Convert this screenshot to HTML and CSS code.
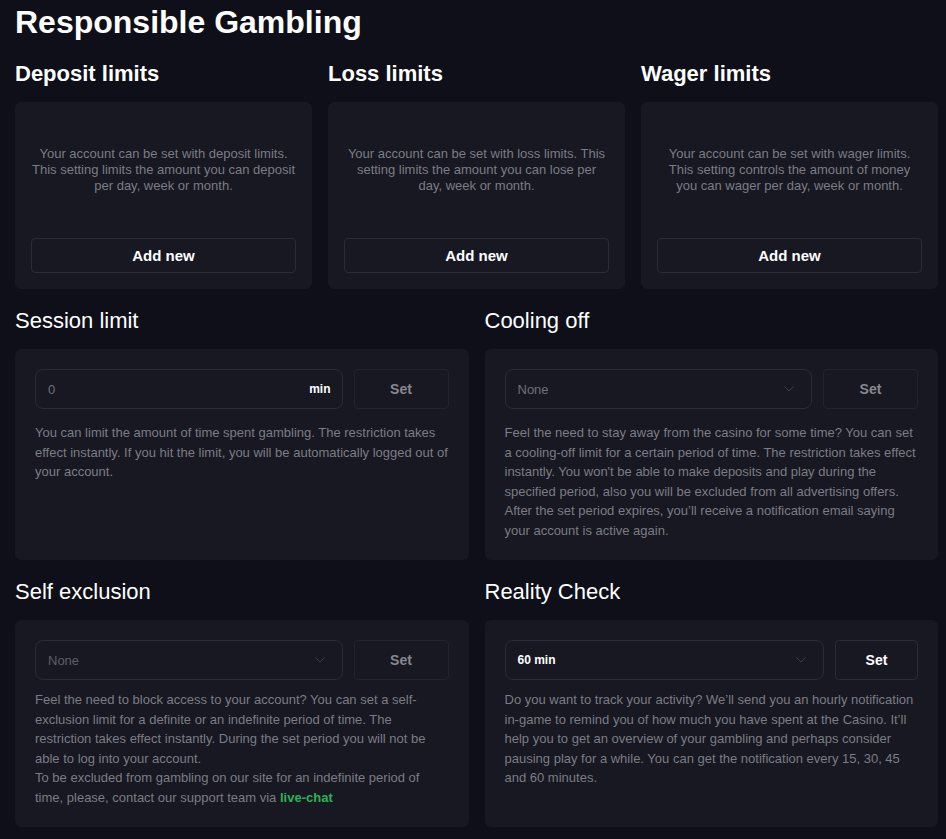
FILE: index.html
```html
<!DOCTYPE html>
<html lang="en">
<head>
<meta charset="utf-8">
<title>Responsible Gambling</title>
<link rel="stylesheet" href="styles.css">
</head>
<body>
<div class="page">
  <h1 class="title">Responsible Gambling</h1>

  <div class="grid3">
    <section class="section">
      <h2 class="heading heading--bold">Deposit limits</h2>
      <div class="card card--limit">
        <p class="limit-text">Your account can be set with deposit limits. This setting limits the amount you can deposit per day, week or month.</p>
        <button class="add-btn">Add new</button>
      </div>
    </section>
    <section class="section">
      <h2 class="heading heading--bold">Loss limits</h2>
      <div class="card card--limit">
        <p class="limit-text">Your account can be set with loss limits. This setting limits the amount you can lose per day, week or month.</p>
        <button class="add-btn">Add new</button>
      </div>
    </section>
    <section class="section">
      <h2 class="heading heading--bold">Wager limits</h2>
      <div class="card card--limit">
        <p class="limit-text">Your account can be set with wager limits. This setting controls the amount of money you can wager per day, week or month.</p>
        <button class="add-btn">Add new</button>
      </div>
    </section>
  </div>

  <div class="grid2">
    <section class="section">
      <h2 class="heading">Session limit</h2>
      <div class="card">
        <div class="controls">
          <div class="field">
            <span class="field-value field-value--muted">0</span>
            <span class="field-unit">min</span>
          </div>
          <button class="set-btn">Set</button>
        </div>
        <p class="desc">You can limit the amount of time spent gambling. The restriction takes effect instantly. If you hit the limit, you will be automatically logged out of your account.</p>
      </div>
    </section>
    <section class="section">
      <h2 class="heading">Cooling off</h2>
      <div class="card">
        <div class="controls">
          <div class="field">
            <span class="field-value field-value--muted">None</span>
            <svg class="chevron" width="10" height="6" viewBox="0 0 10 6"><path d="M0.5 0.5L5 5L9.5 0.5" fill="none" stroke="#3d3e49" stroke-width="1"/></svg>
          </div>
          <button class="set-btn">Set</button>
        </div>
        <p class="desc">Feel the need to stay away from the casino for some time? You can set a cooling-off limit for a certain period of time. The restriction takes effect instantly. You won't be able to make deposits and play during the specified period, also you will be excluded from all advertising offers. After the set period expires, you’ll receive a notification email saying your account is active again.</p>
      </div>
    </section>
    <section class="section">
      <h2 class="heading">Self exclusion</h2>
      <div class="card">
        <div class="controls">
          <div class="field">
            <span class="field-value field-value--dim">None</span>
            <svg class="chevron" width="10" height="6" viewBox="0 0 10 6"><path d="M0.5 0.5L5 5L9.5 0.5" fill="none" stroke="#3d3e49" stroke-width="1"/></svg>
          </div>
          <button class="set-btn">Set</button>
        </div>
        <p class="desc desc--tight">Feel the need to block access to your account? You can set a self-exclusion limit for a definite or an indefinite period of time. The restriction takes effect instantly. During the set period you will not be able to log into your account.<br>To be excluded from gambling on our site for an indefinite period of time, please, contact our support team via <a class="chat-link" href="#">live-chat</a></p>
      </div>
    </section>
    <section class="section">
      <h2 class="heading">Reality Check</h2>
      <div class="card">
        <div class="controls">
          <div class="field">
            <span class="field-value field-value--active">60 min</span>
            <svg class="chevron" width="10" height="6" viewBox="0 0 10 6"><path d="M0.5 0.5L5 5L9.5 0.5" fill="none" stroke="#3d3e49" stroke-width="1"/></svg>
          </div>
          <button class="set-btn set-btn--active">Set</button>
        </div>
        <p class="desc desc--tight">Do you want to track your activity? We’ll send you an hourly notification in-game to remind you of how much you have spent at the Casino. It’ll help you to get an overview of your gambling and perhaps consider pausing play for a while. You can get the notification every 15, 30, 45 and 60 minutes.</p>
      </div>
    </section>
  </div>
</div>
</body>
</html>
```

FILE: styles.css
```css
* { box-sizing: border-box; }

html, body {
  margin: 0;
  padding: 0;
  background: #0e0f18;
}

body {
  font-family: "Liberation Sans", Arial, sans-serif;
  color: #ffffff;
}

.page {
  padding: 3px 8px 12px 15px;
}

.title {
  margin: 0 0 20px;
  font-size: 32px;
  line-height: 38px;
  font-weight: 700;
}

.grid3 {
  display: grid;
  grid-template-columns: repeat(3, 1fr);
  column-gap: 16px;
  margin-bottom: 19px;
}

.grid2 {
  display: grid;
  grid-template-columns: repeat(2, 1fr);
  column-gap: 16px;
  row-gap: 19px;
}

.section {
  display: flex;
  flex-direction: column;
}

.heading {
  margin: 0 0 15px;
  font-size: 22px;
  line-height: 26px;
  font-weight: 400;
}

.heading--bold {
  font-weight: 700;
}

.card {
  flex: 1;
  background: #171821;
  border-radius: 6px;
  padding: 20px;
}

.card--limit {
  display: flex;
  flex-direction: column;
  padding: 16px;
}

.limit-text {
  margin: 0;
  padding: 28px 0 44px;
  font-size: 13px;
  line-height: 16px;
  color: #7b7c85;
  text-align: center;
}

.add-btn {
  height: 35px;
  width: 100%;
  background: transparent;
  border: 1px solid #2a2b36;
  border-radius: 4px;
  color: #ffffff;
  font-family: inherit;
  font-size: 15px;
  font-weight: 700;
}

.controls {
  display: flex;
  gap: 11px;
}

.field {
  flex: 1;
  height: 40px;
  border: 1px solid #2a2b36;
  border-radius: 8px;
  display: flex;
  align-items: center;
  justify-content: space-between;
  padding: 0 11px 0 12px;
}

.field-value {
  font-size: 13px;
}

.field-value--muted {
  color: #6f707a;
}

.field-value--dim {
  color: #5e5f69;
}

.field-value--active {
  color: #ffffff;
  font-weight: 700;
  font-size: 12px;
}

.field-unit {
  color: #ffffff;
  font-weight: 700;
  font-size: 12px;
}

.chevron {
  margin-right: 6px;
}

.set-btn {
  width: 95px;
  height: 40px;
  background: transparent;
  border: 1px solid #22232d;
  border-radius: 4px;
  color: #86878f;
  font-family: inherit;
  font-size: 14px;
  font-weight: 700;
}

.set-btn--active {
  width: 83px;
  color: #ffffff;
  border-color: #2a2b36;
}

.desc {
  margin: 14px 0 0;
  font-size: 13px;
  line-height: 19.5px;
  color: #7b7c85;
}

.desc--tight {
  margin-top: 10px;
}

.chat-link {
  color: #2bb455;
  font-weight: 700;
  text-decoration: none;
}
```
